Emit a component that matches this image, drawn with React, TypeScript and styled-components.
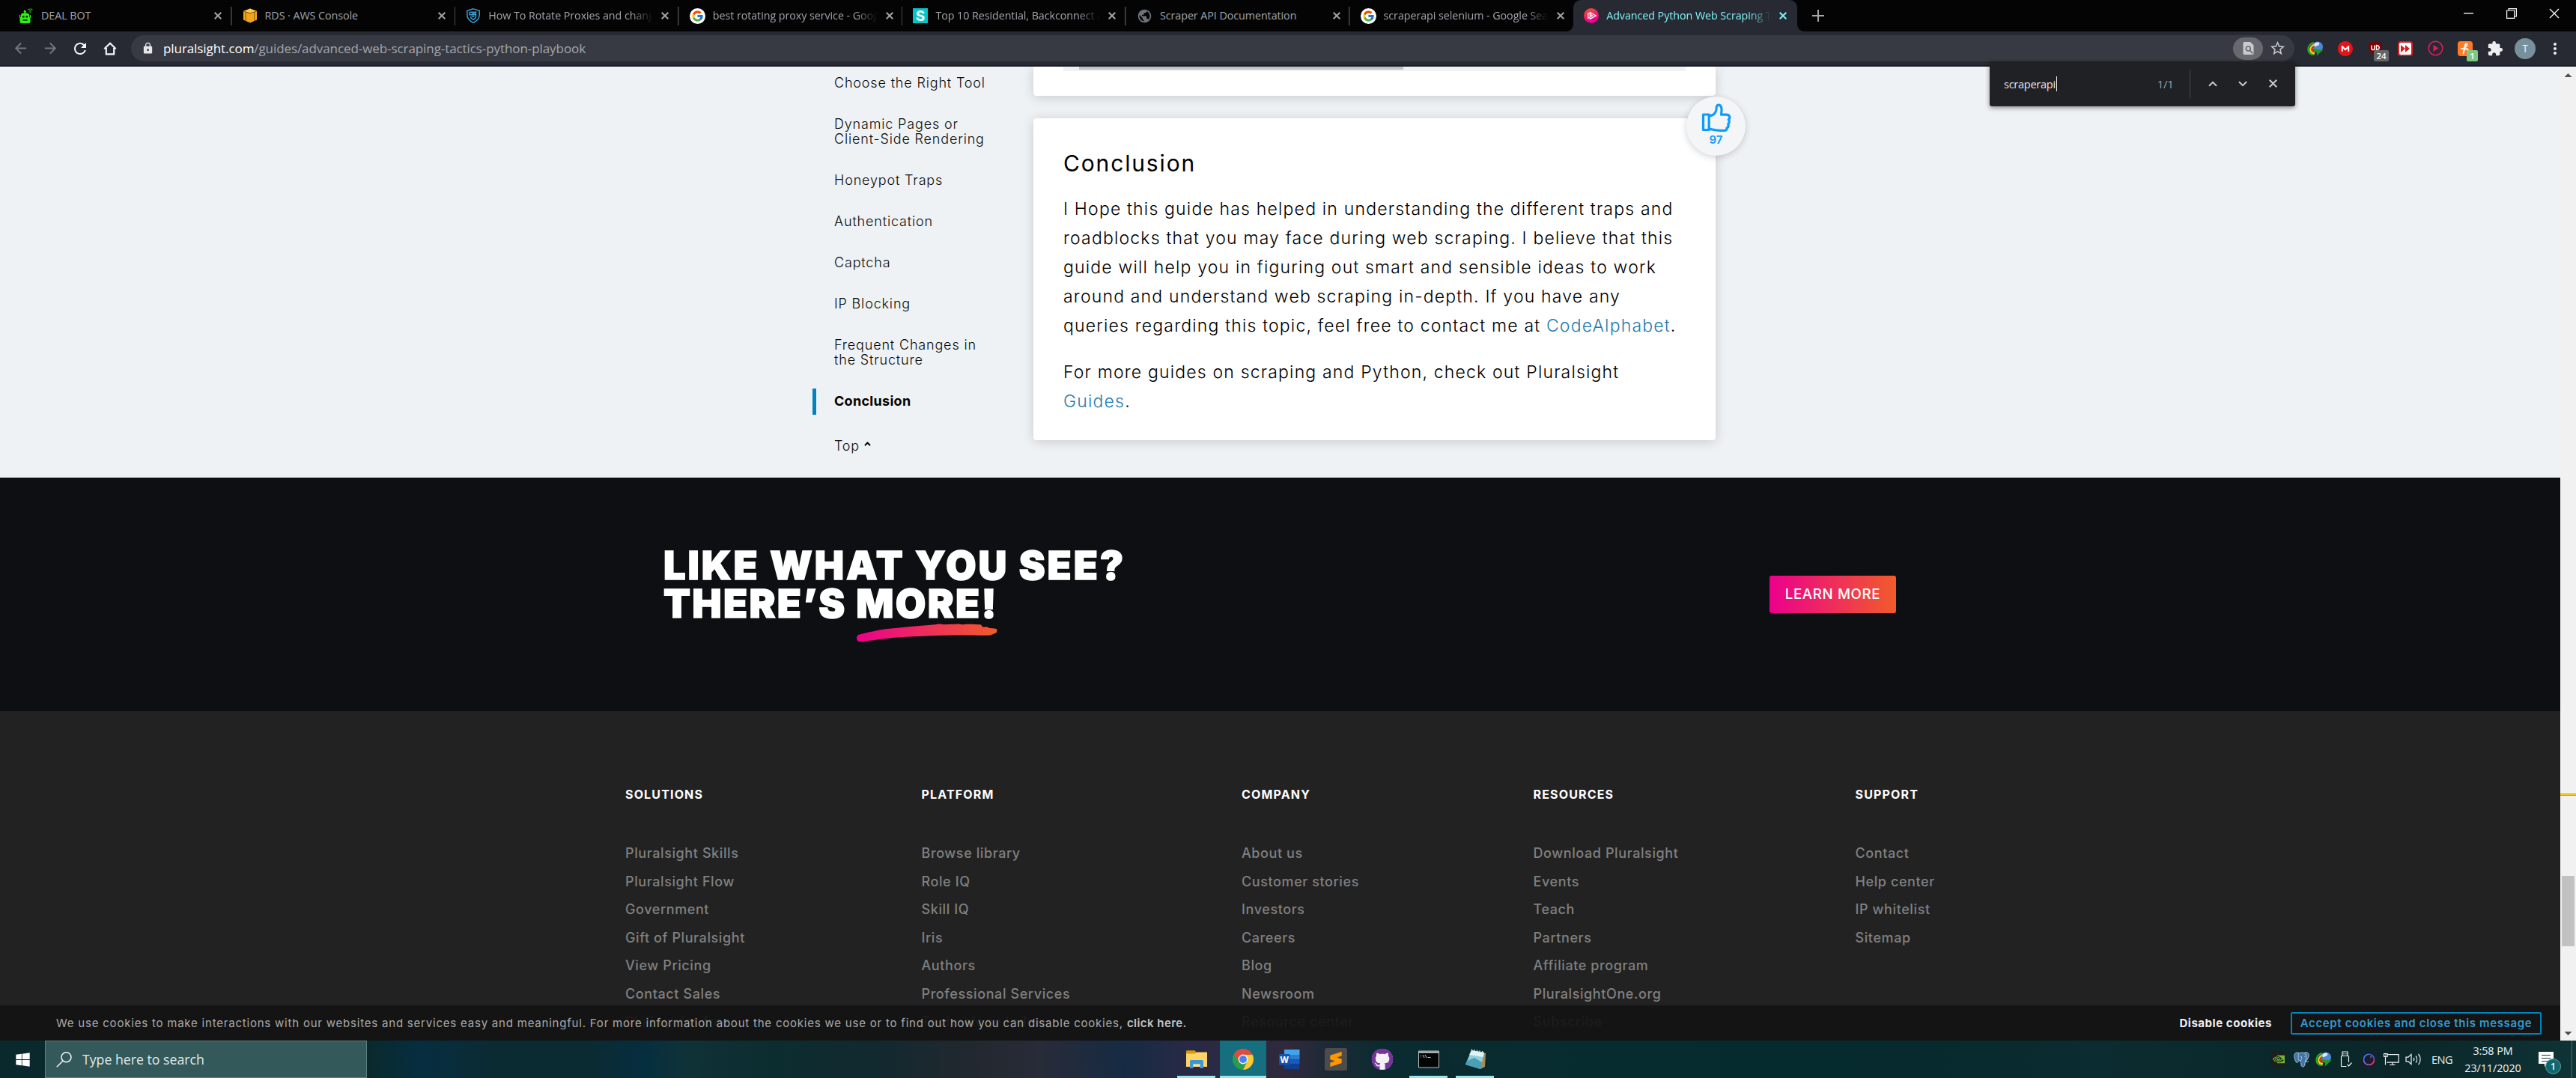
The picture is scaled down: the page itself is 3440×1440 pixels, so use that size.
import React from 'react';
import styled, { createGlobalStyle, css } from 'styled-components';
import { FcGoogle } from 'react-icons/fc';
import { FaGithub, FaWindows } from 'react-icons/fa';
import { MdExtension, MdLock, MdStarBorder, MdArrowBack, MdArrowForward, MdRefresh, MdMoreVert, MdPublic } from 'react-icons/md';
import { SiSublimetext, SiNvidia, SiMega } from 'react-icons/si';

const UI = '"Open Sans", "Noto Sans", sans-serif';
const PAGE = 'Inter, "Noto Sans", sans-serif';

const GlobalStyle = createGlobalStyle`
  *, *::before, *::after { box-sizing: border-box; }
  html, body { margin: 0; padding: 0; background: #000; }
  h2, h3, p, ul { margin: 0; padding: 0; font-weight: inherit; }
  ul { list-style: none; }
  svg { display: block; flex: none; }
`;

const Screen = styled.div`
  width: 3440px;
  height: 1440px;
  display: flex;
  flex-direction: column;
  overflow: hidden;
  position: relative;
  white-space: nowrap;
  font-family: ${UI};
`;

/* ---------- Tab strip ---------- */

const TabStrip = styled.div`
  height: 42px;
  background: #040405;
  display: flex;
  padding-left: 11px;
`;

const Tab = styled.div<{ $active?: boolean; $divider?: boolean }>`
  width: 298.6px;
  height: 42px;
  display: flex;
  align-items: center;
  padding-left: 14px;
  position: relative;
  color: ${p => (p.$active ? '#7df3f5' : '#a0a4aa')};
  ${p => p.$active && css`
    background: #282a33;
    border-radius: 10px 10px 0 0;
    &::before, &::after {
      content: '';
      position: absolute;
      bottom: 0;
      width: 9px;
      height: 9px;
    }
    &::before { left: -9px; background: radial-gradient(circle at 0 0, transparent 8.5px, #282a33 9px); }
    &::after { right: -9px; background: radial-gradient(circle at 100% 0, transparent 8.5px, #282a33 9px); }
  `}
  ${p => p.$divider && css`
    background: linear-gradient(#4a4c50, #4a4c50) right center / 1.5px 25px no-repeat;
  `}
`;

const TabTitle = styled.span<{ $fade?: boolean }>`
  width: 220px;
  margin-left: 10px;
  overflow: hidden;
  font-size: 14.3px;
  line-height: 22px;
  letter-spacing: -0.06px;
  ${p => p.$fade && css`
    mask-image: linear-gradient(90deg, #000 190px, transparent 220px);
  `}
`;

const TabClose = styled.span`
  width: 32px;
  display: flex;
  justify-content: center;
`;

const NewTab = styled.div`
  width: 57px;
  display: flex;
  align-items: center;
  justify-content: center;
  color: #a5a8ad;
`;

const WindowButtons = styled.div`
  display: flex;
  margin-left: auto;
  margin-right: 1px;
  height: 36px;
  color: #fff;
`;

const WindowButton = styled.div`
  width: 57px;
  display: flex;
  align-items: center;
  justify-content: center;
`;

/* ---------- Toolbar ---------- */

const Toolbar = styled.div`
  height: 47px;
  background: #282a33;
  border-bottom: 2px solid #1b1d26;
  display: flex;
  align-items: center;
  padding-left: 7px;
`;

const NavButton = styled.div<{ $dim?: boolean }>`
  width: 40px;
  display: flex;
  justify-content: center;
  color: ${p => (p.$dim ? '#74777e' : '#f4f5f7')};
`;

const Omnibox = styled.div`
  margin-left: 8px;
  width: 2889px;
  height: 35px;
  border-radius: 18px;
  background: #383a43;
  display: flex;
  align-items: center;
  padding-left: 14px;
  padding-right: 7px;
  color: #e6e7ea;
`;

const Url = styled.span`
  margin-left: 12px;
  font-size: 17px;
  line-height: 24px;
  letter-spacing: -0.08px;
  color: #a3a6ac;
`;

const UrlHost = styled.span`
  color: #fff;
`;

const FindPill = styled.span`
  margin-left: auto;
  width: 40px;
  height: 30px;
  border-radius: 15px;
  background: #68696f;
  display: flex;
  align-items: center;
  justify-content: center;
`;

const StarSlot = styled.span`
  width: 38px;
  display: flex;
  justify-content: center;
  margin-right: -3px;
  color: #c8cace;
`;

const Extensions = styled.div`
  margin-left: 8px;
  display: flex;
`;

const Extension = styled.div`
  width: 40px;
  height: 34px;
  display: flex;
  align-items: center;
  justify-content: center;
  position: relative;
  color: #eceef0;
`;

const ExtensionBadge = styled.span<{ $bg: string; $wide?: boolean }>`
  position: absolute;
  left: ${p => (p.$wide ? 18 : 22)}px;
  top: 19px;
  width: ${p => (p.$wide ? 20 : 15)}px;
  height: 15px;
  border-radius: 2px;
  background: ${p => p.$bg};
  color: #fff;
  font-size: 11.5px;
  font-weight: 600;
  line-height: 16px;
  text-align: center;
`;

const Tile = styled.span<{ $bg: string; $border?: string }>`
  width: 20px;
  height: 20px;
  border-radius: 4px;
  background: ${p => p.$bg};
  border: ${p => (p.$border ? `2.5px solid ${p.$border}` : 'none')};
  display: flex;
  align-items: center;
  justify-content: center;
`;

const Avatar = styled.span`
  width: 28px;
  height: 28px;
  border-radius: 50%;
  background: #78909c;
  color: #f4f6f8;
  font-size: 14px;
  line-height: 28px;
  text-align: center;
`;

/* ---------- Find bar ---------- */

const FindBar = styled.div`
  position: absolute;
  left: 2657px;
  top: 82px;
  width: 408px;
  height: 60px;
  z-index: 5;
  display: flex;
  align-items: center;
  padding: 0 10px 1px 19px;
  background: #202124;
  border-radius: 0 0 3px 3px;
  box-shadow: 0 2px 6px rgba(0, 0, 0, 0.45);
  color: #e4e6e9;
  font-size: 14.6px;
  letter-spacing: -0.3px;
`;

const Caret = styled.span`
  width: 1px;
  height: 20px;
  margin-left: 1px;
  background: #fff;
`;

const Matches = styled.span`
  margin-left: auto;
  font-size: 15px;
  color: #9aa0a6;
`;

const FindDivider = styled.span`
  width: 1.5px;
  height: 40px;
  margin: 0 10px 0 21px;
  background: #46484c;
`;

const FindButton = styled.span`
  width: 40px;
  display: flex;
  justify-content: center;
  color: #c9ccd0;
`;

/* ---------- Page ---------- */

const Viewport = styled.div`
  height: 1301px;
  display: flex;
`;

const Page = styled.div`
  width: 3419px;
  display: flex;
  flex-direction: column;
  font-family: ${PAGE};
  position: relative;
  overflow: hidden;
`;

const Guide = styled.main`
  height: 549px;
  background: #eef2f5;
  display: flex;
  padding-left: 1085px;
  overflow: hidden;
`;

const Contents = styled.ul`
  width: 295px;
  display: flex;
  flex-direction: column;
  gap: 20px;
  padding-top: 4.5px;
`;

const ContentsItem = styled.li<{ $current?: boolean; $spaced?: boolean }>`
  padding: 7px 0 8px 24px;
  border-left: 5px solid ${p => (p.$current ? '#0084bd' : 'transparent')};
  margin-top: ${p => (p.$spaced ? 5 : 0)}px;
  display: flex;
  gap: 6px;
  font-size: 18px;
  line-height: 20px;
  font-weight: ${p => (p.$current ? 700 : 300)};
  letter-spacing: ${p => (p.$current ? 0.3 : 0.83)}px;
  color: ${p => (p.$current ? '#000' : '#0a0a0a')};
`;

const TopCaret = styled.svg`
  margin-top: 4px;
`;

const Cards = styled.div`
  width: 911px;
  display: flex;
  flex-direction: column;
  gap: 30px;
`;

const Card = styled.section<{ $clipped?: boolean }>`
  height: ${p => (p.$clipped ? 39 : 430)}px;
  padding: ${p => (p.$clipped ? 0 : 39.5)}px 40px 0;
  background: #fff;
  border-radius: ${p => (p.$clipped ? '0 0 4px 4px' : '4px')};
  box-shadow: 0 2px 15px rgba(0, 0, 0, 0.17);
  position: relative;
`;

const CodeScroll = styled.div`
  height: 6px;
  background: #f1f1f1;
  padding-left: 21px;
`;

const CodeThumb = styled.div`
  width: 433px;
  height: 4px;
  background: #c1c1c1;
`;

const CardHeading = styled.h2`
  font-size: 30px;
  line-height: 40px;
  font-weight: 400;
  letter-spacing: 1.85px;
  color: #000;
`;

const Paragraph = styled.p`
  margin-top: 22.8px;
  font-size: 23px;
  line-height: 39px;
  font-weight: 300;
  letter-spacing: 1.18px;
  color: #000;
`;

const Link = styled.a`
  color: #1f7bb0;
`;

const LikeBadge = styled.div`
  position: absolute;
  left: 872px;
  top: -29px;
  width: 79px;
  height: 79px;
  border-radius: 50%;
  background: #f3f5f7;
  box-shadow: 0 2px 10px rgba(0, 0, 0, 0.18);
  display: flex;
  flex-direction: column;
  align-items: center;
  padding-top: 9px;
  gap: 2px;
  color: #0a9cff;
  font-size: 15px;
  line-height: 18px;
  font-weight: 600;
`;

const Hero = styled.section`
  height: 312px;
  background: #0d0f12;
  display: flex;
  padding-left: 886px;
`;

const HeroCopy = styled.div`
  width: 1477px;
  padding-top: 91.5px;
`;

const HeroLine = styled.div<{ $spacing: number }>`
  height: 51px;
  font-size: 52.5px;
  line-height: 51px;
  font-weight: 900;
  letter-spacing: ${p => p.$spacing}px;
  color: #fff;
  -webkit-text-stroke: 1.4px #fff;
`;

const Swoosh = styled.svg`
  margin: 1px 0 0 258px;
`;

const HeroButton = styled.div`
  width: 169px;
  height: 50px;
  margin-top: 131px;
  border-radius: 3px;
  background: linear-gradient(90deg, #ec008c, #f15b2a);
  color: #fff;
  font-size: 18.7px;
  line-height: 49px;
  font-weight: 500;
  letter-spacing: 0.65px;
  text-align: center;
`;

const Footer = styled.footer`
  height: 440px;
  background: #222;
  padding: 101px 0 0 835px;
  display: grid;
  grid-template-columns: 395.5px 427.5px 389.5px 430px 1fr;
`;

const FooterHeading = styled.h3`
  font-size: 16px;
  line-height: 20px;
  font-weight: 700;
  letter-spacing: 1.15px;
  color: #fff;
  margin-bottom: 50px;
`;

const FooterLink = styled.li`
  font-size: 18px;
  line-height: 37.5px;
  font-weight: 500;
  letter-spacing: 0.6px;
  color: #808080;
`;

const CookieBar = styled.div`
  position: absolute;
  left: 0;
  bottom: 0;
  width: 3419px;
  height: 47px;
  padding: 0 25px 0 75px;
  background: rgba(19, 19, 19, 0.925);
  display: flex;
  align-items: center;
  font-size: 15px;
  line-height: 20px;
  letter-spacing: 0.79px;
  color: #aaa;
`;

const CookieLink = styled.b`
  font-weight: 600;
  color: #c4c4c4;
  letter-spacing: 0.45px;
`;

const DisableCookies = styled.span`
  margin-left: auto;
  font-weight: 700;
  letter-spacing: 0.55px;
  color: #f0f0f0;
`;

const AcceptCookies = styled.span`
  margin-left: 25px;
  width: 335px;
  height: 30px;
  border: 2px solid #0084bd;
  border-radius: 2px;
  line-height: 26px;
  text-align: center;
  font-weight: 600;
  letter-spacing: 0.65px;
  color: #2f9bd3;
`;

const Scrollbar = styled.div`
  width: 21px;
  background: #f1f1f1;
  display: flex;
  flex-direction: column;
  align-items: center;
  padding: 9px 0 7px;
`;

const Marker = styled.div`
  width: 21px;
  height: 3px;
  margin-top: 957px;
  background: #ffd21f;
  border: solid #d0a000;
  border-width: 1px 0;
`;

const Thumb = styled.div`
  width: 17px;
  height: 94px;
  margin-top: 107px;
  margin-bottom: auto;
  background: #c1c1c1;
`;

const Arrow = styled.span<{ $down?: boolean }>`
  width: 10px;
  height: 5px;
  background: #505050;
  clip-path: ${p => (p.$down ? 'polygon(0 0, 100% 0, 50% 100%)' : 'polygon(50% 0, 100% 100%, 0 100%)')};
`;

/* ---------- Taskbar ---------- */

const Taskbar = styled.div`
  height: 50px;
  display: flex;
  background: linear-gradient(90deg, #0a292c 0, #0a292c 490px, #062e40 560px, #0b2b33 660px, #0b2b33 790px, #052e3f 860px, #0f3238 910px,
    #0c2d2f 1040px, #12292f 1180px, #23282f 1300px, #282b38 1390px, #162b43 1500px, #292946 1590px, #30293d 1720px, #1c2a36 1775px,
    #0a2b2f 1850px, #062c2f 2200px, #062a2d 2550px, #0b2c30 2800px, #0a2628 3200px, #0f3336 3440px);
`;

const StartButton = styled.div`
  width: 60px;
  display: flex;
  align-items: center;
  justify-content: center;
  color: #fff;
`;

const SearchBox = styled.div`
  width: 430px;
  border: 1px solid #5d8183;
  background: #34595a;
  display: flex;
  align-items: center;
  padding-left: 14px;
  gap: 14px;
  font-size: 17.7px;
  color: #e2eaea;
`;

const TaskbarApps = styled.div`
  display: flex;
  margin-left: 1077px;
`;

const TaskbarApp = styled.div<{ $state?: 'open' | 'focused' }>`
  width: 62px;
  height: 50px;
  display: flex;
  align-items: center;
  justify-content: center;
  background: ${p => (p.$state === 'focused' ? '#166f7f' : 'transparent')};
  position: relative;
  ${p => p.$state && css`
    &::after {
      content: '';
      position: absolute;
      left: ${p.$state === 'focused' ? 0 : 5}px;
      right: ${p.$state === 'focused' ? 0 : 6}px;
      bottom: 0;
      height: 3px;
      background: #93e6ea;
    }
  `}
`;

const Tray = styled.div`
  display: flex;
  align-items: center;
  margin-left: auto;
  color: #f2f4f5;
  font-size: 14.4px;
  letter-spacing: -0.1px;
`;

const TrayIcon = styled.span`
  width: 30px;
  display: flex;
  justify-content: center;
`;

const Language = styled.span`
  width: 46px;
  text-align: center;
  font-size: 14.6px;
  letter-spacing: -0.6px;
`;

const Clock = styled.span`
  width: 90px;
  line-height: 23px;
  text-align: center;
`;

const Notifications = styled.span`
  width: 61px;
  height: 50px;
  padding: 15px 0 0 16px;
  border-right: 1px solid #506e70;
  margin-right: 5px;
  position: relative;
`;

const NotificationCount = styled.span`
  position: absolute;
  left: 25px;
  top: 24px;
  width: 21px;
  height: 21px;
  border-radius: 50%;
  border: 1px solid #6fa0a3;
  background: #0d6870;
  font-size: 13px;
  font-weight: 600;
  line-height: 19px;
  text-align: center;
`;

/* ---------- Icons ---------- */

const CloseIcon = ({ size = 10, width = 2 }: { size?: number; width?: number }) => (
  <svg width={size} height={size} viewBox="0 0 10 10" stroke="currentColor" strokeWidth={width} fill="none">
    <path d="M.7.7l8.6 8.6M9.3.7L.7 9.3" />
  </svg>
);

const ChevronIcon = ({ down = false }: { down?: boolean }) => (
  <svg width="12" height="8" viewBox="0 0 12 8" stroke="currentColor" strokeWidth="2" fill="none">
    <path d={down ? 'M1 1.2l5 5 5-5' : 'M1 6.8l5-5 5 5'} />
  </svg>
);

const RobotIcon = () => (
  <svg width="20" height="20" viewBox="0 0 20 20">
    <path d="M7.5 3h1.6v4H7.5z" fill="#2bf50b" />
    <circle cx="8.3" cy="4.2" r="1.6" fill="#2bf50b" />
    <path d="M12 2.2c1.8-1.6 5-1.6 6.5 0M13.5 4.2c1-.9 2.5-.9 3.5 0" stroke="#22b80f" strokeWidth="1.2" fill="none" />
    <circle cx="15.2" cy="5.6" r=".8" fill="#22b80f" />
    <path d="M3 12V9.500a3 3 0 013-3h5a3 3 0 013 3V12zM1 9h1.300v3.500H1zM14.700 9H16v3.500h-1.300zM1.500 12h14v5.500a2.500 2.500 0 01-2.500 2.500H4a2.500 2.500 0 01-2.500-2.500z" fill="#2bf50b" />
    <path d="M5 10h2.500v2.500H5zM9.500 10H12v2.500H9.500zM5.500 15h6v1.700h-6z" fill="#052b02" />
  </svg>
);

const RdsIcon = () => (
  <svg width="20" height="20" viewBox="0 0 20 20">
    <path d="M1 4l9-3.5L19 4v11.5l-9 4-9-4z" fill="#f2a51e" />
    <path d="M1 4l9 2.5L19 4l-9-3.5z" fill="#ffc845" />
    <path d="M1.5 4.2l8.500 2.500 8.500-2.500M4.200 5v12.200M15.800 5v12.200" stroke="#7b4d05" strokeWidth=".9" fill="none" />
  </svg>
);

const ShieldIcon = () => (
  <svg width="20" height="20" viewBox="0 0 20 20" fill="none" stroke="#3aa0d8" strokeWidth="1.5">
    <path d="M10 .9l8.2 2.300v5.400c0 5-3.300 8.700-8.200 10.600C5.100 17.300 1.800 13.600 1.800 8.600V3.200z" />
    <path d="M14.500 5.200H6.300c-.9 0-1.300.5-1.300 1.200v2.400h8.500v2.200c0 1.900-1.500 3.300-3.500 4.400-2-1.100-3.400-2.300-4-3.900M7.800 7.200H14M7.500 11h3.800" />
  </svg>
);

const GoogleIcon = () => (
  <svg width="21" height="21" viewBox="0 0 21 21">
    <circle cx="10.5" cy="10.5" r="10.5" fill="#fff" />
    <g transform="translate(2 2)"><FcGoogle size={17} /></g>
  </svg>
);

const STileIcon = () => (
  <svg width="20" height="20" viewBox="0 0 20 20">
    <path d="M0 0h20v20H0z" fill="#05c5c9" />
    <text x="10" y="17" textAnchor="middle" fontFamily="Inter, sans-serif" fontWeight="700" fontSize="19" fill="#fff">S</text>
  </svg>
);

const PluralsightIcon = () => (
  <svg width="20" height="20" viewBox="0 0 20 20">
    <defs>
      <linearGradient id="ps" x1="0" y1="0" x2=".4" y2="1"><stop offset="0" stopColor="#f15b2a" /><stop offset=".9" stopColor="#ec008c" /></linearGradient>
    </defs>
    <circle cx="10" cy="10" r="10" fill="url(#ps)" />
    <path d="M8.3 5.6l8 4.400-8 4.400zM5.800 6.800v6.400l6-3.200z" fill="none" stroke="#fff" strokeWidth="1.2" />
  </svg>
);

const IdmIcon = () => (
  <svg width="22" height="20" viewBox="0 0 22 20">
    <circle cx="14" cy="7.5" r="7" fill="#4d86d8" />
    <path d="M9.5 3.5A6 6 0 0116 2c1 2-1 4-3.5 4.500S9 9 9.500 3.500z" fill="#dbe9f8" />
    <path d="M9 2C3.500 3 1 8 1.500 12c.5 4 4 6 8 6" stroke="#2fa62b" strokeWidth="2.2" fill="none" />
    <path d="M9.500 4.500C5.500 6 4 9.500 4.300 12c.4 2.500 2.700 4 5.700 4" stroke="#f3d21b" strokeWidth="2.4" fill="none" />
    <path d="M9.500 7C7 9 6.400 10.500 6.600 12c.3 1.200 1.900 2 3.900 2" stroke="#e0361d" strokeWidth="2" fill="none" />
    <path d="M9 9.500l5 1.500 7.500.5-9 8 .5-4.500-4-2z" fill="#1f9b22" />
  </svg>
);

const UblockIcon = () => (
  <svg width="22" height="22" viewBox="0 0 22 22">
    <path d="M11 1c3 1.700 6 2.400 9 2.600C20.200 11 18 17 11 21 4 17 1.800 11 2 3.600 5 3.400 8 2.700 11 1z" fill="#800000" />
    <path d="M6 6.500v4.200c0 2.400 4 2.400 4 0V6.500M12.500 6.500v6c5 .3 5-6 0-6z" stroke="#fff" strokeWidth="1.5" fill="none" />
  </svg>
);

const HoneyIcon = () => (
  <svg width="16" height="18" viewBox="0 0 16 18" fill="none" stroke="#fff" strokeWidth="1.8" strokeLinecap="round">
    <path d="M5.500 15.500L8 4c.5-2.500 3-2.500 2.600-.3C10 7 6 9.500 3 9M7 10.500c2-2 5-2 4.500.3l-.7 3.200c-.2 1.300.7 1.600 1.700.8" />
  </svg>
);

const ThumbIcon = () => (
  <svg width="40" height="38" viewBox="0 0 40 38" fill="none" stroke="#0a9cff" strokeWidth="3.2" strokeLinejoin="round">
    <path d="M2.500 15h7.700v20.500H2.500z" />
    <path d="M10.200 16.500c6 0 8.500-2.500 9.600-7.500.4-2.500-.2-6.900 2.900-6.900 4.400 0 5 5 3.800 13h7c4.500 0 5.600 4.800 2.800 6.800 1.500 2 1.200 4.500-.6 5.800 1 2.500 0 4.500-1.800 5.500.3 2.500-1.300 3.300-3.900 3.300-8 0-12.500-.2-19.800-2.800" />
  </svg>
);

const ChromeIcon = () => (
  <svg width="28" height="28" viewBox="0 0 28 28">
    <circle cx="14" cy="14" r="14" fill="#2a9d4c" />
    <path d="M14 7.700h12.500A14 14 0 0114 28l5.500-10.900z" fill="#fcc934" />
    <path d="M14 7.700H26.500A14 14 0 001.900 7l6.600 10.100z" fill="#e14a3e" />
    <circle cx="14" cy="14" r="6.400" fill="#f4f6f8" />
    <circle cx="14" cy="14" r="5" fill="#4b82ee" />
  </svg>
);

const ExplorerIcon = () => (
  <svg width="28" height="24" viewBox="0 0 28 24">
    <path d="M0 1.500A1.200 1.200 0 011.200.3h10.300l2 2.200v7H0z" fill="#dd9a08" />
    <path d="M0 4.500h12l2-2h14v19.500H0z" fill="#ffd465" />
    <path d="M5 24V14.500a1.500 1.500 0 011.500-1.500h15a1.500 1.500 0 011.500 1.500V24h-4.500v-5.500h-9V24z" fill="#3a96dd" />
    <path d="M9.500 18.500h9V22h-9z" fill="#ffe08a" />
  </svg>
);

const WordIcon = () => (
  <svg width="28" height="28" viewBox="0 0 28 28">
    <path d="M7 1h20.500v7H7z" fill="#41a5ee" />
    <path d="M7 8h20.500v6.300H7z" fill="#2b7cd3" />
    <path d="M7 14.300h20.500v6.200H7z" fill="#185abd" />
    <path d="M7 20.500h20.500V27H7z" fill="#103f91" />
    <rect x="0" y="7" width="14.500" height="14.500" rx="1.2" fill="#1652ac" />
    <text x="7.200" y="18.500" textAnchor="middle" fontFamily="Inter, sans-serif" fontWeight="700" fontSize="11.5" fill="#fff">W</text>
  </svg>
);

const SublimeIcon = () => (
  <svg width="30" height="30" viewBox="0 0 30 30">
    <rect width="30" height="30" rx="3" fill="#4c4c4c" />
    <g transform="translate(5 5)"><SiSublimetext size={20} color="#ff9800" /></g>
  </svg>
);

const GithubIcon = () => (
  <svg width="30" height="30" viewBox="0 0 30 30">
    <circle cx="15" cy="15" r="14" fill="#f4f0f7" />
    <g transform="translate(.2 .2)"><FaGithub size={29.6} color="#76359a" /></g>
  </svg>
);

const TerminalIcon = () => (
  <svg width="28" height="24" viewBox="0 0 28 24">
    <path d="M.5 1h27v22H.5z" fill="#050505" stroke="#b9bcbd" />
    <path d="M1 1.500h26v2H1z" fill="#d9dbdc" />
    <path d="M3 6.500h1M3 9h1M6 6l2 4M9 6l2 4M12.500 9.500h4" stroke="#c9c9c9" strokeWidth="1" fill="none" />
  </svg>
);

const NotepadIcon = () => (
  <svg width="28" height="28" viewBox="0 0 28 28">
    <path d="M25 5l3 1-1 18-6 3z" fill="#a98b57" />
    <path d="M9 2l17 3-5 22L1 21z" fill="#8fd0dd" />
    <path d="M9 2l17 3-1.500 6L6 8z" fill="#dff3f6" />
    <path d="M3 16l10-4 10 6-2 9L1 21z" fill="#4a9fb4" />
    <path d="M9.500 3.500v-3M13 4V1M16.500 4.600V1.700M20 5.200V2.300M23.500 5.800V3" stroke="#dfe6e8" strokeWidth="1.3" />
  </svg>
);

const PostgresIcon = () => (
  <svg width="21" height="21" viewBox="0 0 21 21" fill="#3f74a8" stroke="#b4cde2" strokeWidth=".9" strokeLinejoin="round">
    <path d="M6.500 1.200C3 .3.600 2.300.8 6c.2 3.500 2 8.500 3.700 8.500 1 0 1.800-1.600 2.800-2.600z" />
    <path d="M14.500 1.200c3.500-1.200 6.500.8 5.700 4.300-.7 3-2.700 6.500-4.500 7.800z" />
    <path d="M10.500 1C7 1 5.800 3.500 6 7c.2 2.500.2 4.500 2 5 .8.2 1.500 0 1.500 0 .3 3 .2 5.500.9 7 .7 1.500 3.700 1.300 4.300-.7.5-2 .3-4.500.8-6.300 1.500-2 2-5 1-7.500C15.500 2 13.500 1 10.500 1z" />
    <path d="M15.700 13.300c1.300.6 3 .3 4.300-.5M8.300 6.500c.8-.6 1.800-.5 2.200.3.300 1.700-.4 3.200-1 5.200M14.200 6.300h1.500" fill="none" />
  </svg>
);

const UsbIcon = () => (
  <svg width="16" height="22" viewBox="0 0 16 22" fill="none" stroke="#f2f4f5" strokeWidth="1.2">
    <path d="M3 6.500V1h7v5.500M1.500 20.500v-13a1 1 0 011-1h8a1 1 0 011 1V15M1.500 20.500h7" />
    <path d="M5 3v1.500M8 3v1.500M9.500 17.500l2 2.500 4-4.500" />
  </svg>
);

const RingIcon = () => (
  <svg width="19" height="19" viewBox="0 0 19 19">
    <rect width="19" height="19" rx="4" fill="#1c1d2b" />
    <path d="M9.500 2.200a7 7 0 00-7 7.300" stroke="#2b8cf0" strokeWidth="1.6" fill="none" />
    <path d="M9.500 2.200a7 7 0 017 7.300" stroke="#5a5bd8" strokeWidth="1.6" fill="none" />
    <path d="M2.500 9.500c0 4 3 6.900 7 6.900" stroke="#7b6ee0" strokeWidth="1.6" fill="none" />
    <path d="M9.500 16.400c4 0 7-3 7-6.900" stroke="#e0417f" strokeWidth="1.6" fill="none" />
    <circle cx="12" cy="6" r=".9" fill="#7f7fd0" />
  </svg>
);

const NetworkIcon = () => (
  <svg width="21" height="18" viewBox="0 0 21 18" fill="none" stroke="#f2f4f5" strokeWidth="1.2">
    <path d="M5 2.600h15.200v10.500H4.500M12 13v3.500M8 16.500h7.500M2.500 6v10.500" />
    <path d="M.6 1.500h4.500v4H.6zM2 3.200h1.800" />
  </svg>
);

const SpeakerIcon = () => (
  <svg width="22" height="18" viewBox="0 0 22 18" fill="none" stroke="#f2f4f5" strokeWidth="1.2">
    <path d="M1 6.200h3L8 2.300v13.400l-4-3.900H1z" />
    <path d="M11 6.800c1 1.300 1 3.100 0 4.400M14 4.500c2.200 2.600 2.200 6.400 0 9M17.500 2c3.500 4 3.500 10 0 14" />
  </svg>
);

/* ---------- Data ---------- */

const tabs = [
  { title: 'DEAL BOT', icon: <RobotIcon />, divider: true },
  { title: 'RDS · AWS Console', icon: <RdsIcon />, divider: true },
  { title: 'How To Rotate Proxies and change', icon: <ShieldIcon />, divider: true, fade: true },
  { title: 'best rotating proxy service - Google', icon: <GoogleIcon />, divider: true, fade: true },
  { title: 'Top 10 Residential, Backconnect &', icon: <STileIcon />, divider: true, fade: true },
  { title: 'Scraper API Documentation', icon: <MdPublic size={21} color="#6f7377" />, divider: true },
  { title: 'scraperapi selenium - Google Search', icon: <GoogleIcon />, fade: true },
  { title: 'Advanced Python Web Scraping Tactics', icon: <PluralsightIcon />, active: true, fade: true },
];

const contents: React.ReactNode[] = [
  'Choose the Right Tool',
  <>Dynamic Pages or<br />Client-Side Rendering</>,
  'Honeypot Traps',
  'Authentication',
  'Captcha',
  'IP Blocking',
  <>Frequent Changes in<br />the Structure</>,
];

const footerColumns = [
  { heading: 'SOLUTIONS', links: ['Pluralsight Skills', 'Pluralsight Flow', 'Government', 'Gift of Pluralsight', 'View Pricing', 'Contact Sales', 'Skill up for free'] },
  { heading: 'PLATFORM', links: ['Browse library', 'Role IQ', 'Skill IQ', 'Iris', 'Authors', 'Professional Services', 'Technology Index'] },
  { heading: 'COMPANY', links: ['About us', 'Customer stories', 'Investors', 'Careers', 'Blog', 'Newsroom', 'Resource center'] },
  { heading: 'RESOURCES', links: ['Download Pluralsight', 'Events', 'Teach', 'Partners', 'Affiliate program', 'PluralsightOne.org', 'Subscribe'] },
  { heading: 'SUPPORT', links: ['Contact', 'Help center', 'IP whitelist', 'Sitemap'] },
];

const apps: { icon: React.ReactNode; state?: 'open' | 'focused' }[] = [
  { icon: <ExplorerIcon />, state: 'open' },
  { icon: <ChromeIcon />, state: 'focused' },
  { icon: <WordIcon /> },
  { icon: <SublimeIcon /> },
  { icon: <GithubIcon /> },
  { icon: <TerminalIcon />, state: 'open' },
  { icon: <NotepadIcon />, state: 'open' },
];

export default function App() {
  return (
    <Screen>
      <GlobalStyle />

      <TabStrip>
        {tabs.map(tab => (
          <Tab key={tab.title} $active={tab.active} $divider={tab.divider}>
            {tab.icon}
            <TabTitle $fade={tab.fade}>{tab.title}</TabTitle>
            <TabClose><CloseIcon /></TabClose>
          </Tab>
        ))}
        <NewTab>
          <svg width="16" height="16" viewBox="0 0 16 16" stroke="currentColor" strokeWidth="2"><path d="M8 0v16M0 8h16" /></svg>
        </NewTab>
        <WindowButtons>
          <WindowButton><svg width="13" height="2" viewBox="0 0 13 2"><path d="M0 0h13v1.300H0z" fill="#fff" /></svg></WindowButton>
          <WindowButton>
            <svg width="14" height="14" viewBox="0 0 14 14" fill="none" stroke="#fff" strokeWidth="1.2"><path d="M.6 3h10v10.400H.6zM3 3V.6h10.400V11h-2.600" /></svg>
          </WindowButton>
          <WindowButton><CloseIcon size={14} width={0.9} /></WindowButton>
        </WindowButtons>
      </TabStrip>

      <Toolbar>
        <NavButton $dim><MdArrowBack size={23} /></NavButton>
        <NavButton $dim><MdArrowForward size={23} /></NavButton>
        <NavButton><MdRefresh size={24} /></NavButton>
        <NavButton>
          <svg width="18" height="18" viewBox="0 0 18 18" fill="none" stroke="currentColor" strokeWidth="2.2">
            <path d="M1.300 9.300L9 1.700l7.700 7.600M3.800 8v8.300h10.400V8" />
          </svg>
        </NavButton>
        <Omnibox>
          <MdLock size={17} />
          <Url><UrlHost>pluralsight.com</UrlHost>/guides/advanced-web-scraping-tactics-python-playbook</Url>
          <FindPill>
            <svg width="15" height="17" viewBox="0 0 15 17">
              <path d="M2 0h8l4.500 4.500v11a1.500 1.500 0 01-1.500 1.500H2A1.500 1.500 0 01.5 15.500v-14A1.500 1.500 0 012 0z" fill="#c9cacd" />
              <circle cx="7.300" cy="9" r="3" fill="none" stroke="#68696f" strokeWidth="1.6" />
              <path d="M9.300 11l4 4.500" stroke="#68696f" strokeWidth="1.6" />
            </svg>
          </FindPill>
          <StarSlot><MdStarBorder size={23} /></StarSlot>
        </Omnibox>
        <Extensions>
          <Extension><IdmIcon /></Extension>
          <Extension>
            <svg width="20" height="20" viewBox="0 0 20 20">
              <circle cx="10" cy="10" r="9" fill="#fff" />
              <SiMega size={20} color="#e8121a" />
            </svg>
          </Extension>
          <Extension><UblockIcon /><ExtensionBadge $bg="#666" $wide>24</ExtensionBadge></Extension>
          <Extension>
            <Tile $bg="#fff" $border="#cf2026">
              <svg width="12" height="10" viewBox="0 0 12 10" fill="#cf2026"><path d="M0 0l6 5-6 5zM6 0l6 5-6 5z" /></svg>
            </Tile>
          </Extension>
          <Extension>
            <svg width="21" height="21" viewBox="0 0 21 21">
              <circle cx="10.5" cy="10.5" r="9.3" fill="none" stroke="#d81e5b" strokeWidth="1.6" />
              <path d="M7.500 6l7 4.500-7 4.500z" fill="#d81e5b" />
            </svg>
          </Extension>
          <Extension><Tile $bg="#ff7a22"><HoneyIcon /></Tile><ExtensionBadge $bg="#81c784">1</ExtensionBadge></Extension>
          <Extension><MdExtension size={22} /></Extension>
          <Extension><Avatar>T</Avatar></Extension>
          <Extension><MdMoreVert size={24} /></Extension>
        </Extensions>
      </Toolbar>

      <FindBar>
        scraperapi<Caret />
        <Matches>1/1</Matches>
        <FindDivider />
        <FindButton><ChevronIcon /></FindButton>
        <FindButton><ChevronIcon down /></FindButton>
        <FindButton><CloseIcon size={11} width={1.8} /></FindButton>
      </FindBar>

      <Viewport>
        <Page>
          <Guide>
            <Contents>
              {contents.map((item, i) => <ContentsItem key={i}><span>{item}</span></ContentsItem>)}
              <ContentsItem $current>Conclusion</ContentsItem>
              <ContentsItem $spaced>
                Top
                <TopCaret width="9" height="6" viewBox="0 0 9 6" fill="none" stroke="#000" strokeWidth="2"><path d="M1 5l3.500-3.500L8 5" /></TopCaret>
              </ContentsItem>
            </Contents>
            <Cards>
              <Card $clipped><CodeScroll><CodeThumb /></CodeScroll></Card>
              <Card>
                <CardHeading>Conclusion</CardHeading>
                <Paragraph>
                  I Hope this guide has helped in understanding the different traps and<br />
                  roadblocks that you may face during web scraping. I believe that this<br />
                  guide will help you in figuring out smart and sensible ideas to work<br />
                  around and understand web scraping in-depth. If you have any<br />
                  queries regarding this topic, feel free to contact me at <Link>CodeAlphabet</Link>.
                </Paragraph>
                <Paragraph>
                  For more guides on scraping and Python, check out Pluralsight<br />
                  <Link>Guides</Link>.
                </Paragraph>
                <LikeBadge><ThumbIcon />97</LikeBadge>
              </Card>
            </Cards>
          </Guide>

          <Hero>
            <HeroCopy>
              <HeroLine $spacing={2.9}>LIKE WHAT YOU SEE?</HeroLine>
              <HeroLine $spacing={2.3}>THERE’S MORE!</HeroLine>
              <Swoosh width="188" height="25" viewBox="0 0 188 25">
                <defs>
                  <linearGradient id="swoosh"><stop offset="0" stopColor="#ec008c" /><stop offset="1" stopColor="#f15b2a" /></linearGradient>
                </defs>
                <path
                  d="M2 15C15 12 30 8 44 6.800 65 4.500 85 3 105 1.300c3-.8 8-1.200 11 0l20-.8c3 0 5 1.300 8 .6 6-1 16 0 21 .2 2 .4 2 2 3 3.300l7 0c0 1.500 4 1.500 8 2 5 0 5 2 3.500 5.600-3 1.300-7 3.500-12 3.600-25-.2-45-.6-68 .2C85 17 65 17.500 50 18.800 32 20.500 20 23 8 23.700 3 24.500 0 25 0 18z"
                  fill="url(#swoosh)"
                />
              </Swoosh>
            </HeroCopy>
            <HeroButton>LEARN MORE</HeroButton>
          </Hero>

          <Footer>
            {footerColumns.map(column => (
              <div key={column.heading}>
                <FooterHeading>{column.heading}</FooterHeading>
                <ul>{column.links.map(link => <FooterLink key={link}>{link}</FooterLink>)}</ul>
              </div>
            ))}
          </Footer>

          <CookieBar>
            <span>
              We use cookies to make interactions with our websites and services easy and meaningful. For more information about the cookies we use or to find out how you can disable cookies, <CookieLink>click here.</CookieLink>
            </span>
            <DisableCookies>Disable cookies</DisableCookies>
            <AcceptCookies>Accept cookies and close this message</AcceptCookies>
          </CookieBar>
        </Page>
        <Scrollbar>
          <Arrow />
          <Marker />
          <Thumb />
          <Arrow $down />
        </Scrollbar>
      </Viewport>

      <Taskbar>
        <StartButton><FaWindows size={21} /></StartButton>
        <SearchBox>
          <svg width="21" height="21" viewBox="0 0 21 21" fill="none" stroke="#f2f5f5" strokeWidth="1.5">
            <circle cx="13.5" cy="7.3" r="6.5" /><path d="M9 12L.8 20.200" />
          </svg>
          Type here to search
        </SearchBox>
        <TaskbarApps>
          {apps.map((app, i) => <TaskbarApp key={i} $state={app.state}>{app.icon}</TaskbarApp>)}
        </TaskbarApps>
        <Tray>
          <TrayIcon>
            <svg width="20" height="20" viewBox="0 0 20 20">
              <path d="M0 0h20v20H0z" fill="#1c1f1d" />
              <g transform="translate(2 2)"><SiNvidia size={16} color="#76b23a" /></g>
            </svg>
          </TrayIcon>
          <TrayIcon><PostgresIcon /></TrayIcon>
          <TrayIcon><IdmIcon /></TrayIcon>
          <TrayIcon><UsbIcon /></TrayIcon>
          <TrayIcon><RingIcon /></TrayIcon>
          <TrayIcon><NetworkIcon /></TrayIcon>
          <TrayIcon><SpeakerIcon /></TrayIcon>
          <Language>ENG</Language>
          <Clock>3:58 PM<br />23/11/2020</Clock>
          <Notifications>
            <svg width="21" height="20" viewBox="0 0 21 20">
              <path d="M0 0h20v16h-8l-4 4v-4H0z" fill="#fff" />
              <path d="M4 4.500h12M4 8.500h12M4 12.500h9" stroke="#123a3d" strokeWidth="1.2" />
            </svg>
            <NotificationCount>1</NotificationCount>
          </Notifications>
        </Tray>
      </Taskbar>
    </Screen>
  );
}
